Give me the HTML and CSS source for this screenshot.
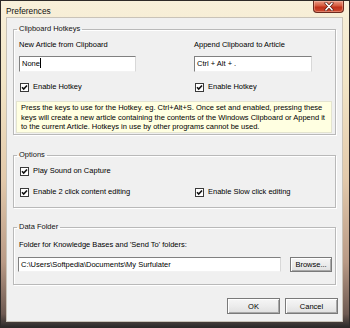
FILE: index.html
```html
<!DOCTYPE html>
<html>
<head>
<meta charset="utf-8">
<link rel="stylesheet" href="styles.css">
</head>
<body>
<div class="window">
  <div class="titlebar">
    <span class="title">Preferences</span>
    <span class="close">
      <svg width="12" height="9" viewBox="0 0 12 9"><path d="M3 1.2 L9 7.8 M9 1.2 L3 7.8" stroke="#5a1c12" stroke-width="3" stroke-linecap="round"/><path d="M3 1.2 L9 7.8 M9 1.2 L3 7.8" stroke="#fff" stroke-width="1.6" stroke-linecap="round"/></svg>
    </span>
  </div>
  <div class="client">
    <fieldset class="group g1">
      <legend>Clipboard Hotkeys</legend>
      <div class="grid">
        <div class="lbl">New Article from Clipboard</div>
        <div class="lbl">Append Clipboard to Article</div>
        <div class="field w1">None<span class="caret"></span></div>
        <div class="field w2">Ctrl + Alt + .</div>
        <label class="check"><svg width="9" height="9" viewBox="0 0 9 9"><rect x="0.5" y="0.5" width="8" height="8" fill="#fff" stroke="#3a3a3a"/><path d="M2 4.3 L3.7 6.1 L7 2.5" stroke="#111" stroke-width="1.6" fill="none"/></svg>Enable Hotkey</label>
        <label class="check"><svg width="9" height="9" viewBox="0 0 9 9"><rect x="0.5" y="0.5" width="8" height="8" fill="#fff" stroke="#3a3a3a"/><path d="M2 4.3 L3.7 6.1 L7 2.5" stroke="#111" stroke-width="1.6" fill="none"/></svg>Enable Hotkey</label>
      </div>
      <div class="info">Press the keys to use for the Hotkey. eg. Ctrl+Alt+S. Once set and enabled, pressing these<br>keys will create a new article containing the contents of the Windows Clipboard or Append it<br>to the current Article. Hotkeys in use by other programs cannot be used.</div>
    </fieldset>

    <fieldset class="group g2">
      <legend>Options</legend>
      <div class="grid">
        <label class="check row1"><svg width="9" height="9" viewBox="0 0 9 9"><rect x="0.5" y="0.5" width="8" height="8" fill="#fff" stroke="#3a3a3a"/><path d="M2 4.3 L3.7 6.1 L7 2.5" stroke="#111" stroke-width="1.6" fill="none"/></svg>Play Sound on Capture</label>
        <div></div>
        <label class="check row2"><svg width="9" height="9" viewBox="0 0 9 9"><rect x="0.5" y="0.5" width="8" height="8" fill="#fff" stroke="#3a3a3a"/><path d="M2 4.3 L3.7 6.1 L7 2.5" stroke="#111" stroke-width="1.6" fill="none"/></svg>Enable 2 click content editing</label>
        <label class="check row2"><svg width="9" height="9" viewBox="0 0 9 9"><rect x="0.5" y="0.5" width="8" height="8" fill="#fff" stroke="#3a3a3a"/><path d="M2 4.3 L3.7 6.1 L7 2.5" stroke="#111" stroke-width="1.6" fill="none"/></svg>Enable Slow click editing</label>
      </div>
    </fieldset>

    <fieldset class="group g3">
      <legend>Data Folder</legend>
      <div class="lbl folderlbl">Folder for Knowledge Bases and 'Send To' folders:</div>
      <div class="pathrow">
        <div class="field path">C:\Users\Softpedia\Documents\My Surfulater</div>
        <div class="btn browse">Browse...</div>
      </div>
    </fieldset>

    <div class="buttons">
      <div class="btn ok">OK</div>
      <div class="btn">Cancel</div>
    </div>
  </div>
</div>
</body>
</html>
```

FILE: styles.css
```css
* { box-sizing: border-box; }
html, body { margin: 0; padding: 0; background: #fff; }
body {
  font-family: "Liberation Sans", Arial, sans-serif;
  font-size: 7.5px;
  color: #000;
}
.window {
  width: 350px;
  height: 328px;
  border: 1px solid #2e2a28;
  background: linear-gradient(to bottom, #f8f0da 0%, #f2e5c6 25%, #e2c9ab 55%, #b99a86 80%, #6e5a52 96%, #2c2a2a 100%);
  padding: 0 6px 5px 5px;
  display: flex;
  flex-direction: column;
}
.titlebar {
  height: 16px;
  display: flex;
  justify-content: space-between;
  align-items: flex-start;
  margin-right: -1px;
}
.title {
  font-size: 8.3px;
  line-height: 10px;
  margin-top: 5px;
  color: #111;
}
.close {
  width: 31px;
  height: 12px;
  border: 1px solid #6b2a1e;
  border-top: none;
  border-radius: 0 0 4px 4px;
  background: linear-gradient(to bottom, #eb9a84 0%, #d4583c 45%, #c0301a 55%, #cc4a30 100%);
  box-shadow: inset 0 0 0 1px rgba(255,210,190,0.4);
  display: flex;
  align-items: center;
  justify-content: center;
}
.client {
  flex: 1;
  background: #f0f0f0;
  border: 1px solid #c9c3b8;
  display: flex;
  flex-direction: column;
}
.group {
  margin: 0 6px 0 6px;
  padding: 0 3px 0 2px;
  border: 1px solid #b9b9b9;
  box-shadow: inset 1px 1px 0 #fff, 1px 1px 0 #fff;
  min-width: 0;
}
.group legend {
  padding: 0 2px;
  margin-left: 1px;
  line-height: 10px;
  color: #111;
}
.g1 { margin-top: 6px; padding-bottom: 1px; }
.g2 { margin-top: 15px; padding-bottom: 10px; }
.g3 { margin-top: 14px; padding-bottom: 12px; }
.grid {
  display: grid;
  grid-template-columns: 175px 1fr;
  padding-left: 3px;
}
.lbl { line-height: 10px; }
.g1 .lbl { margin-top: 6px; }
.field {
  height: 16px;
  background: #fff;
  border: 1px solid;
  border-color: #808080 #d8d8d8 #f2f2f2 #808080;
  line-height: 14px;
  padding-left: 2px;
  white-space: nowrap;
  overflow: hidden;
}
.g1 .field { margin-top: 6px; }
.w1 { width: 117px; }
.w2 { width: 118px; }
.caret {
  display: inline-block;
  width: 1px;
  height: 10px;
  background: #000;
  vertical-align: -2px;
}
.check {
  display: flex;
  align-items: center;
  gap: 4px;
  line-height: 10px;
  height: 10px;
  padding-left: 1px;
}
.g1 .check { margin-top: 10px; }
.row1 { margin-top: 6px; }
.row2 { margin-top: 11px; }
.info {
  margin-top: 9px;
  height: 32px;
  background: #ffffe1;
  border: 1px solid #e4e4d0;
  padding: 1px 0 0 4px;
  line-height: 9.6px;
  white-space: nowrap;
}
.folderlbl { margin-top: 8px; padding-left: 3px; }
.pathrow {
  display: flex;
  align-items: center;
  margin-top: 7px;
  padding-left: 2px;
}
.path { width: 264px; height: 15px; line-height: 13px; }
.btn {
  height: 16px;
  width: 53px;
  border: 1px solid #7a7a7a;
  background: linear-gradient(to bottom, #f6f6f6 0%, #ececec 50%, #e0e0e0 100%);
  box-shadow: inset 1px 1px 0 #fff, inset -1px -1px 0 #a8a8a8;
  display: flex;
  align-items: center;
  justify-content: center;
  color: #000;
}
.browse { width: 42px; height: 15px; margin-left: 9px; }
.buttons {
  display: flex;
  justify-content: flex-end;
  gap: 5px;
  margin-top: 13px;
  padding-right: 4px;
}
```
